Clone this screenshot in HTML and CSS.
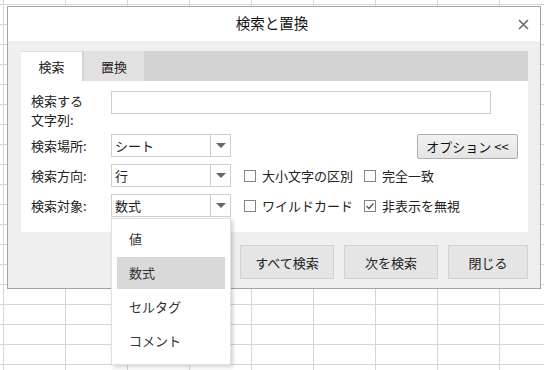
FILE: index.html
```html
<!DOCTYPE html>
<html lang="ja">

<head>
    <meta charset="utf-8">
    <title>検索と置換</title>
    <link rel="stylesheet" href="styles.css">
</head>

<body>
    <div class="dialog">

        <div class="title-bar">
            <span></span>
            <span class="title">検索と置換</span>
            <span class="close">
                <svg width="11" height="11" viewBox="0 0 11 11">
                    <path d="M1 1 L10 10 M10 1 L1 10" stroke="#6b6b6b" stroke-width="1.6" fill="none" />
                </svg>
            </span>
        </div>

        <div class="dialog-body">
            <div class="tabs">
                <div class="tab active">検索</div>
                <div class="tab">置換</div>
            </div>

            <div class="panel">
                <div class="row row-find">
                    <span class="label label-two">検索する<br>文字列:</span>
                    <input class="text-input" type="text">
                </div>

                <div class="row">
                    <span class="label">検索場所:</span>
                    <div class="select">
                        <span class="select-value">シート</span>
                        <span class="select-arrow"><i class="triangle"></i></span>
                    </div>
                    <button class="option-btn">オプション &lt;&lt;</button>
                </div>

                <div class="row">
                    <span class="label">検索方向:</span>
                    <div class="select">
                        <span class="select-value">行</span>
                        <span class="select-arrow"><i class="triangle"></i></span>
                    </div>
                    <label class="check check-first"><span class="box"></span>大小文字の区別</label>
                    <label class="check"><span class="box"></span>完全一致</label>
                </div>

                <div class="row">
                    <span class="label">検索対象:</span>
                    <div class="select open">
                        <span class="select-value">数式</span>
                        <span class="select-arrow"><i class="triangle"></i></span>
                        <ul class="dropdown">
                            <li>値</li>
                            <li class="selected">数式</li>
                            <li>セルタグ</li>
                            <li>コメント</li>
                        </ul>
                    </div>
                    <label class="check check-first"><span class="box"></span>ワイルドカード</label>
                    <label class="check"><span class="box checked">
                            <svg width="10" height="10" viewBox="0 0 10 10">
                                <path d="M1.5 5 L4 7.5 L8.5 2.5" stroke="#555" stroke-width="1.3" fill="none" />
                            </svg>
                        </span>非表示を無視</label>
                </div>
            </div>

            <div class="buttons">
                <button class="btn btn-wide">すべて検索</button>
                <button class="btn btn-wide">次を検索</button>
                <button class="btn">閉じる</button>
            </div>
        </div>

    </div>
</body>

</html>
```

FILE: styles.css
```css
body {
    margin: 0;
    padding: 6px 0 0 7px;
    height: 370px;
    box-sizing: border-box;
    overflow: hidden;
    font-family: "Noto Sans CJK JP", "Noto Sans", sans-serif;
    font-size: 13px;
    color: #222;
    background-color: white;
    background-image:
        linear-gradient(to right, #d6d6d6 1px, transparent 1px),
        linear-gradient(to bottom, #d6d6d6 1px, transparent 1px);
    background-size: 62px 100%, 100% 20px;
    background-position: 3px 0, 0 4px;
}

.dialog {
    width: 534px;
    height: 283px;
    box-sizing: border-box;
    border: 1px solid #a3a3a3;
    background-color: #efefef;
    display: flex;
    flex-direction: column;
}

.title-bar {
    height: 34px;
    background-color: white;
    display: grid;
    grid-template-columns: 1fr auto 1fr;
    align-items: center;
    padding: 0 11px 2px 7px;
    box-sizing: border-box;
}

.title {
    font-size: 14.5px;
    color: #111;
    line-height: 20px;
}

.close {
    justify-self: end;
    display: flex;
    margin-top: 2px;
}

.dialog-body {
    flex: 1;
    padding: 10px 12px 0 13px;
    display: flex;
    flex-direction: column;
}

.tabs {
    height: 30px;
    background-color: #d3d3d3;
    display: flex;
    gap: 2px;
}

.tab {
    width: 60px;
    display: flex;
    align-items: center;
    justify-content: center;
    background-color: #e1e1e1;
    line-height: 16px;
    padding-top: 1px;
    box-sizing: border-box;
}

.tab.active {
    width: 61px;
    background-color: white;
    border-top: 1px solid #e2e2e2;
}

.panel {
    height: 151px;
    background-color: white;
    padding: 10px 10px 0 10px;
    box-sizing: border-box;
}

.row {
    height: 30px;
    display: flex;
    align-items: flex-start;
}

.row-find {
    height: 43px;
}

.label {
    width: 80px;
    line-height: 23px;
    flex-shrink: 0;
}

.label-two {
    line-height: 19px;
}

.text-input {
    width: 380px;
    height: 23px;
    box-sizing: border-box;
    border: 1px solid #cfcfcf;
    margin: 0;
    padding: 0 4px;
    font: inherit;
}

.select {
    position: relative;
    width: 120px;
    height: 23px;
    box-sizing: border-box;
    border: 1px solid #cfcfcf;
    display: flex;
    background-color: white;
}

.select-value {
    flex: 1;
    padding-left: 3px;
    line-height: 21px;
}

.select-arrow {
    width: 19px;
    border-left: 1px solid #cfcfcf;
    display: flex;
    align-items: center;
    justify-content: center;
}

.triangle {
    width: 0;
    height: 0;
    border-left: 5px solid transparent;
    border-right: 5px solid transparent;
    border-top: 5px solid #666;
}

.option-btn {
    margin-left: auto;
    width: 101px;
    height: 25px;
    border: 1px solid #adadad;
    border-radius: 2px;
    background: linear-gradient(#f2f2f2, #e4e4e4);
    font: inherit;
    color: #111;
    padding: 0;
}

.check {
    display: flex;
    align-items: center;
    gap: 6px;
    height: 23px;
}

.check-first {
    margin-left: 13px;
    width: 120px;
}

.box {
    width: 12px;
    height: 12px;
    box-sizing: border-box;
    border: 1px solid #848484;
    display: flex;
    align-items: center;
    justify-content: center;
    background-color: white;
}

.dropdown {
    position: absolute;
    top: 23px;
    left: -1px;
    width: 120px;
    box-sizing: border-box;
    margin: 0;
    padding: 4px 5px 7px 5px;
    list-style: none;
    background-color: white;
    border: 1px solid #e0e0e0;
    box-shadow: 2px 2px 4px rgba(0, 0, 0, 0.18);
    display: flex;
    flex-direction: column;
    gap: 2px;
    z-index: 2;
}

.dropdown li {
    height: 32px;
    line-height: 32px;
    padding-left: 12px;
    color: #333;
}

.dropdown li.selected {
    background-color: #d9d9d9;
}

.buttons {
    margin-top: 13px;
    display: flex;
    justify-content: flex-end;
    gap: 10px;
}

.btn {
    width: 80px;
    height: 34px;
    border: 1px solid #d2d2d2;
    background-color: #e5e5e5;
    font: inherit;
    color: #222;
    padding: 0;
}

.btn-wide {
    width: 94px;
}
```
